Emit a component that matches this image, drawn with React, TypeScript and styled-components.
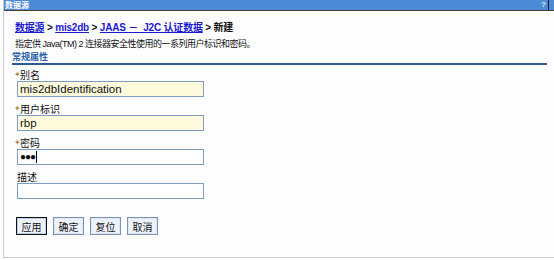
import React from 'react';
import styled, { createGlobalStyle } from 'styled-components';

const GlobalStyle = createGlobalStyle`
  html, body {
    margin: 0;
    padding: 0;
    background: #fff;
  }
  body {
    font-family: "Liberation Sans", "Noto Sans CJK SC", sans-serif;
  }
`;

const Frame = styled.div`
  width: 550px;
  height: 257px;
  margin-left: 3px;
  border-left: 1px solid #c9c9d0;
  border-bottom: 1px solid #c9c9d0;
  background: #fdfdff;
  display: flex;
  flex-direction: column;
`;

const TitleBar = styled.div`
  height: 10px;
  background: #4b8ad6;
  border-bottom: 1px solid #4a3f2a;
  display: flex;
  align-items: center;
  justify-content: space-between;
  padding-left: 1px;
  overflow: hidden;
`;

const TitleText = styled.span`
  color: #fff;
  font-size: 8px;
  line-height: 10px;
  font-weight: bold;
  font-family: "Noto Sans CJK SC", sans-serif;
`;

const TitleTools = styled.div`
  display: flex;
  align-items: stretch;
  height: 10px;
`;

const HelpMark = styled.span`
  color: #dfe9f7;
  font-size: 8px;
  line-height: 10px;
  font-weight: bold;
  padding-right: 2px;
`;

const Divider = styled.span`
  width: 1px;
  background: #1a1a1a;
  margin-right: 5px;
`;

const Body = styled.div`
  padding: 10px 0 0 11px;
  display: flex;
  flex-direction: column;
`;

const Crumbs = styled.div`
  font-size: 10px;
  font-weight: bold;
  color: #111;
  line-height: 14px;
  letter-spacing: -0.2px;
  font-family: "Liberation Sans", "Noto Sans CJK SC", sans-serif;
`;

const Crumb = styled.a`
  color: #1a1ad0;
  text-decoration: underline;
`;

const Desc = styled.div`
  font-size: 9px;
  line-height: 14px;
  color: #111;
  margin-top: 2px;
  letter-spacing: -0.5px;
  font-family: "Liberation Sans", "Noto Sans CJK SC", sans-serif;
`;

const Section = styled.div`
  font-size: 9px;
  font-weight: bold;
  color: #2a5fb0;
  line-height: 12px;
  border-bottom: 2px solid #2a5a9a;
  width: 535px;
  margin-left: -3px;
  font-family: "Noto Sans CJK SC", sans-serif;
`;

const Form = styled.div`
  display: flex;
  flex-direction: column;
  padding: 4px 0 0 2px;
`;

const Field = styled.div`
  display: flex;
  flex-direction: column;
  margin-bottom: 6px;
`;

const Label = styled.label`
  font-size: 10px;
  line-height: 12px;
  height: 12px;
  color: #111;
  display: flex;
  align-items: center;
  font-family: "Noto Sans CJK SC", sans-serif;
`;

const Star = styled.span`
  color: #a08c3c;
  font-size: 8px;
  width: 6px;
  margin-left: -3px;
  font-family: "DejaVu Sans", sans-serif;
`;

const Input = styled.div<{ $required?: boolean }>`
  box-sizing: border-box;
  width: 187px;
  height: 16px;
  border: 1px solid #7f9dc4;
  background: ${p => (p.$required ? '#fdfbdc' : '#fff')};
  font-size: 11.5px;
  color: #111;
  padding-left: 2px;
  display: flex;
  align-items: center;
  font-family: "Liberation Sans", sans-serif;
`;

const Dots = styled.span`
  font-size: 10px;
  letter-spacing: -1px;
  border-right: 1px solid #000;
  padding-right: 1px;
  line-height: 12px;
`;

const Buttons = styled.div`
  display: flex;
  gap: 6px;
  margin-top: 12px;
  padding-left: 1px;
`;

const Button = styled.button<{ $primary?: boolean }>`
  box-sizing: border-box;
  width: 31px;
  height: 18px;
  padding: 0;
  font-size: 10px;
  font-family: "Noto Sans CJK SC", sans-serif;
  color: #111;
  background: #eef2fa;
  border: 1px solid ${p => (p.$primary ? '#111' : '#7d92b8')};
  box-shadow: inset 0 0 0 1px ${p => (p.$primary ? '#bcd0ee' : '#dde6f5')};
`;

const App: React.FC = () => (
  <>
    <GlobalStyle />
    <Frame>
      <TitleBar>
        <TitleText>数据源</TitleText>
        <TitleTools>
          <HelpMark>?</HelpMark>
          <Divider />
        </TitleTools>
      </TitleBar>
      <Body>
        <Crumbs>
          <Crumb>数据源</Crumb> &gt; <Crumb>mis2db</Crumb> &gt;{' '}
          <Crumb>JAAS －&nbsp;&nbsp;J2C 认证数据</Crumb> &gt; 新建
        </Crumbs>
        <Desc>指定供 Java(TM) 2 连接器安全性使用的一系列用户标识和密码。</Desc>
        <Section>常规属性</Section>
        <Form>
          <Field>
            <Label><Star>✦</Star>别名</Label>
            <Input $required>mis2dbIdentification</Input>
          </Field>
          <Field>
            <Label><Star>✦</Star>用户标识</Label>
            <Input $required>rbp</Input>
          </Field>
          <Field>
            <Label><Star>✦</Star>密码</Label>
            <Input><Dots>●●●</Dots></Input>
          </Field>
          <Field>
            <Label>描述</Label>
            <Input />
          </Field>
        </Form>
        <Buttons>
          <Button $primary>应用</Button>
          <Button>确定</Button>
          <Button>复位</Button>
          <Button>取消</Button>
        </Buttons>
      </Body>
    </Frame>
  </>
);

export default App;
